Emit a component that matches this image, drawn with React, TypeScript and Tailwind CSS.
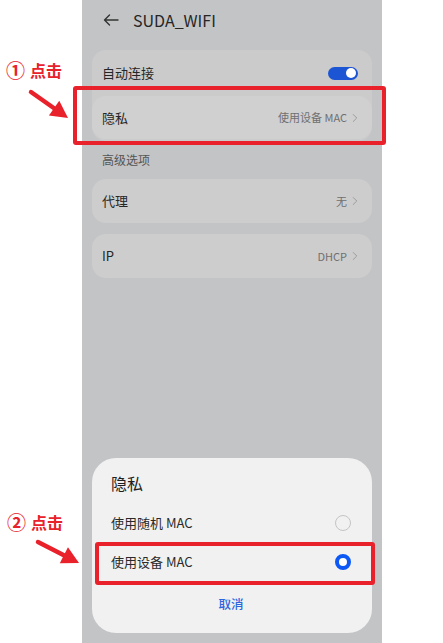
import { ChevronRight } from "lucide-react";

const font = { fontFamily: '"Noto Sans CJK SC", "Noto Sans", sans-serif' };

function Arrow({ x1, y1, x2, y2 }: { x1: number; y1: number; x2: number; y2: number }) {
  const ang = Math.atan2(y2 - y1, x2 - x1);
  const len = 17;
  const half = 9;
  const bx = x2 - Math.cos(ang) * len;
  const by = y2 - Math.sin(ang) * len;
  const px = -Math.sin(ang) * half;
  const py = Math.cos(ang) * half;
  return (
    <svg className="absolute left-0 top-0" width={443} height={643}>
      <line x1={x1} y1={y1} x2={bx} y2={by} stroke="#e8212b" strokeWidth={4.5} strokeLinecap="round" />
      <polygon points={`${x2},${y2} ${bx + px},${by + py} ${bx - px},${by - py}`} fill="#e8212b" />
    </svg>
  );
}

function Row({ label, value, className = "" }: { label: string; value: string; className?: string }) {
  return (
    <div className={"flex items-center justify-between pl-[10px] pr-[10px] " + className}>
      <span className="text-[13px] text-[#262626]">{label}</span>
      <span className="flex items-center gap-[1px] text-[11px] text-[#6f6f70]">
        {value}
        <ChevronRight size={14} strokeWidth={1.3} className="text-[#8c8c8c]" />
      </span>
    </div>
  );
}

function Note({ num, className }: { num: string; className: string }) {
  return (
    <div className={"absolute flex items-center font-bold leading-[22px] text-[#e8212b] " + className}>
      <span className="text-[19px]">{num}</span>
      <span className="ml-[5px] text-[16px]">点击</span>
    </div>
  );
}

export default function App() {
  return (
    <div className="relative flex h-[643px] w-[443px] overflow-hidden bg-white" style={font}>
      <div className="ml-[82px] flex h-full w-[300px] flex-col bg-[#c3c4c6]">
        <div className="flex h-[40px] items-center pl-[21px]">
          <svg width="16" height="12" viewBox="0 0 16 12" fill="none" stroke="#333" strokeWidth="1.4" strokeLinecap="round" strokeLinejoin="round">
            <path d="M15 6H1.5M6.5 1 1.5 6l5 5" />
          </svg>
          <span className="ml-[14px] text-[16px] text-[#262626]">SUDA_WIFI</span>
        </div>

        <div className="mx-[10px] mt-[10px] rounded-[14px] bg-[#cbcbcc] pb-[2px]">
          <div className="flex h-[46px] items-center justify-between pl-[10px] pr-[14px]">
            <span className="text-[13px] text-[#262626]">自动连接</span>
            <span className="flex h-[13px] w-[30px] items-center justify-end rounded-full bg-[#1c55d3] pr-[2px]">
              <span className="h-[10px] w-[10px] rounded-full bg-white" />
            </span>
          </div>
          <Row label="隐私" value="使用设备 MAC" className="h-[43px] rounded-[14px] bg-[#d0d0d0]" />
        </div>

        <div className="flex h-[38px] items-center pl-[20px] text-[12px] text-[#555]">高级选项</div>

        <div className="mx-[10px] rounded-[14px] bg-[#cdcdcd]">
          <Row label="代理" value="无" className="h-[44px]" />
        </div>
        <div className="mx-[10px] mt-[11px] rounded-[14px] bg-[#cdcdcd]">
          <Row label="IP" value="DHCP" className="h-[44px]" />
        </div>

        <div className="flex-1" />

        <div className="mx-[10px] mb-[10px] flex h-[175px] flex-col rounded-[24px] bg-[#f1f1f1] px-[19px] pr-[21px]">
          <div className="flex h-[45px] items-center pt-[4px] text-[16px] text-[#1f1f1f]">隐私</div>
          <div className="flex h-[39px] items-center justify-between">
            <span className="text-[13px] text-[#2a2a2a]">使用随机 MAC</span>
            <span className="h-[16px] w-[16px] rounded-full border-[1.5px] border-[#c4c4c4]" />
          </div>
          <div className="flex h-[39px] items-center justify-between">
            <span className="text-[13px] text-[#2a2a2a]">使用设备 MAC</span>
            <span className="h-[16px] w-[16px] rounded-full border-[4px] border-[#0b58f5] bg-white" />
          </div>
          <div className="flex h-[46px] items-center justify-center text-[12.5px] font-medium text-[#2b66e0]">取消</div>
        </div>
      </div>

      <div className="absolute left-[73px] top-[86px] h-[59px] w-[313px] rounded-[3px] border-4 border-[#e8212b]" />
      <div className="absolute left-[95px] top-[542px] h-[43px] w-[280px] rounded-[3px] border-4 border-[#e8212b]" />

      <Note num="①" className="left-[6px] top-[59px]" />
      <Note num="②" className="left-[7px] top-[511px]" />

      <Arrow x1={31} y1={92} x2={68} y2={118} />
      <Arrow x1={38} y1={542} x2={79} y2={563} />
    </div>
  );
}
